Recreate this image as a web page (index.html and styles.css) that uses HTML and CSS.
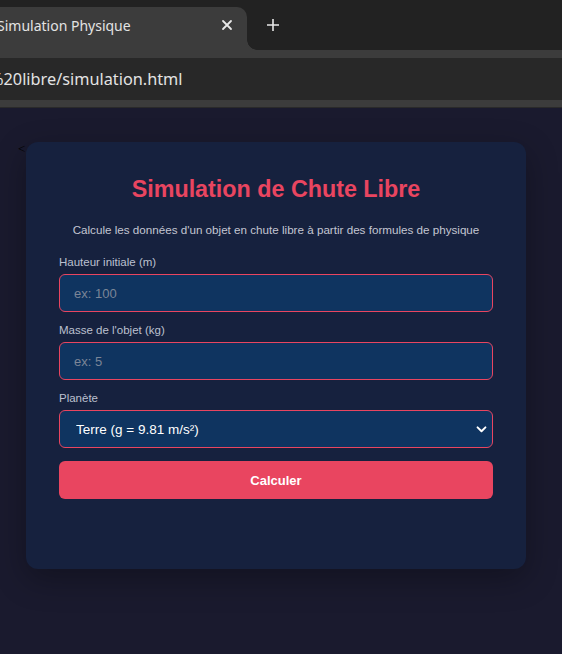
FILE: index.html
```html
<!DOCTYPE html>
<html lang="fr">
<head>
<meta charset="utf-8">
<title>Simulation Physique</title>
<link rel="stylesheet" href="styles.css">
</head>
<body>
  <header class="browser">
    <div class="tabstrip">
      <div class="tab">
        <span class="tab-title">Simulation Physique</span>
        <svg class="tab-close" width="12" height="12" viewBox="0 0 12 12"><path d="M2 2 L10 10 M10 2 L2 10" stroke="#e8e8e8" stroke-width="1.8" stroke-linecap="round"/></svg>
        <span class="tab-flare"></span>
      </div>
      <svg class="new-tab" width="14" height="14" viewBox="0 0 14 14"><path d="M7 1 V13 M1 7 H13" stroke="#e8e8e8" stroke-width="1.6"/></svg>
    </div>
    <div class="toolbar">
      <div class="omnibox"><span class="url">%20libre/simulation.html</span></div>
    </div>
  </header>

  <main class="page">
    <span class="stray">&lt;</span>
    <section class="card">
      <h2 class="title">Simulation de Chute Libre</h2>
      <p class="intro">Calcule les données d'un objet en chute libre à partir des formules de physique</p>

      <label class="field-label" for="hauteur">Hauteur initiale (m)</label>
      <input class="field" id="hauteur" type="number" placeholder="ex: 100">

      <label class="field-label" for="masse">Masse de l'objet (kg)</label>
      <input class="field" id="masse" type="number" placeholder="ex: 5">

      <label class="field-label" for="planete">Planète</label>
      <div class="select-wrap">
        <select class="field select" id="planete">
          <option>Terre (g = 9.81 m/s²)</option>
          <option>Lune (g = 1.62 m/s²)</option>
          <option>Mars (g = 3.71 m/s²)</option>
        </select>
        <svg class="chevron" width="12" height="8" viewBox="0 0 12 8"><path d="M1.5 1.5 L6 6 L10.5 1.5" fill="none" stroke="#ffffff" stroke-width="2.2" stroke-linecap="round" stroke-linejoin="round"/></svg>
      </div>

      <button class="submit" type="button">Calculer</button>
    </section>
  </main>
</body>
</html>
```

FILE: styles.css
```css
* { box-sizing: border-box; }

html, body {
  margin: 0;
  padding: 0;
  height: 100%;
}

body {
  display: flex;
  flex-direction: column;
  background: #1a1a2e;
  font-family: "Liberation Sans", Arial, sans-serif;
}

/* ---- browser frame ---- */
.browser {
  flex: none;
  background: #3c3c3c;
  font-family: "Noto Sans", "Open Sans", sans-serif;
}

.tabstrip {
  height: 50px;
  background: #222222;
  display: flex;
  align-items: flex-end;
}

.tab {
  position: relative;
  width: 250px;
  height: 43px;
  margin-left: -3px;
  background: #3c3c3c;
  border-top-right-radius: 10px;
  display: flex;
  align-items: center;
  padding-bottom: 7px;
}

.tab-flare {
  position: absolute;
  right: -10px;
  bottom: 0;
  width: 10px;
  height: 10px;
  background: radial-gradient(circle at 100% 0, transparent 9.5px, #3c3c3c 10px);
}

.tab-title {
  flex: 1;
  color: #e3e3e3;
  font-size: 14px;
  white-space: nowrap;
}

.tab-close {
  margin-right: 14px;
}

.new-tab {
  margin: 0 0 18px 19px;
}

.toolbar {
  height: 58px;
  padding: 8px 0 8px;
  border-bottom: 1px solid #2a2a2a;
}

.omnibox {
  height: 42px;
  background: #282828;
  display: flex;
  align-items: center;
  overflow: hidden;
}

.url {
  margin-left: -10px;
  color: #e3e3e3;
  font-size: 16.3px;
  white-space: nowrap;
}

/* ---- page ---- */
.page {
  flex: 1;
  display: flex;
  align-items: flex-start;
  padding: 34px 0 0 18px;
}

.stray {
  width: 8px;
  font-family: "Liberation Serif", serif;
  font-size: 13px;
  line-height: 14px;
  color: #000000;
}

.card {
  width: 500px;
  background: #16213e;
  border-radius: 12px;
  padding: 33px 33px 70px;
  box-shadow: 0 10px 32px rgba(0, 0, 0, 0.3);
  display: flex;
  flex-direction: column;
}

.title {
  margin: 0;
  color: #e94560;
  font-size: 23.3px;
  line-height: 28px;
  font-weight: 700;
  text-align: center;
}

.intro {
  margin: 20px 0 18px;
  color: #c4c6d2;
  font-size: 11.65px;
  line-height: 14px;
  text-align: center;
}

.field-label {
  color: #bcc0cf;
  font-size: 11.5px;
  line-height: 14px;
  margin-bottom: 5px;
}

.field {
  display: block;
  width: 100%;
  height: 38px;
  margin: 0 0 11px;
  padding: 0 14px;
  background: #0f3460;
  border: 1px solid #e94560;
  border-radius: 6px;
  color: #ffffff;
  font-family: "Liberation Sans", Arial, sans-serif;
  font-size: 13px;
  outline: none;
}

.field::placeholder {
  color: #7b8597;
}

.field::-webkit-outer-spin-button,
.field::-webkit-inner-spin-button {
  -webkit-appearance: none;
  margin: 0;
}

.select-wrap {
  position: relative;
  margin-bottom: 13px;
}

.select {
  margin: 0;
  -webkit-appearance: none;
  appearance: none;
  padding-left: 16px;
  font-size: 13.5px;
}

.chevron {
  position: absolute;
  right: 6px;
  top: 16px;
  width: 11px;
  height: 7px;
  pointer-events: none;
}

.submit {
  height: 38px;
  width: 100%;
  border: none;
  border-radius: 6px;
  background: #e94560;
  color: #ffffff;
  font-family: "Liberation Sans", Arial, sans-serif;
  font-size: 13px;
  font-weight: 700;
}
```
